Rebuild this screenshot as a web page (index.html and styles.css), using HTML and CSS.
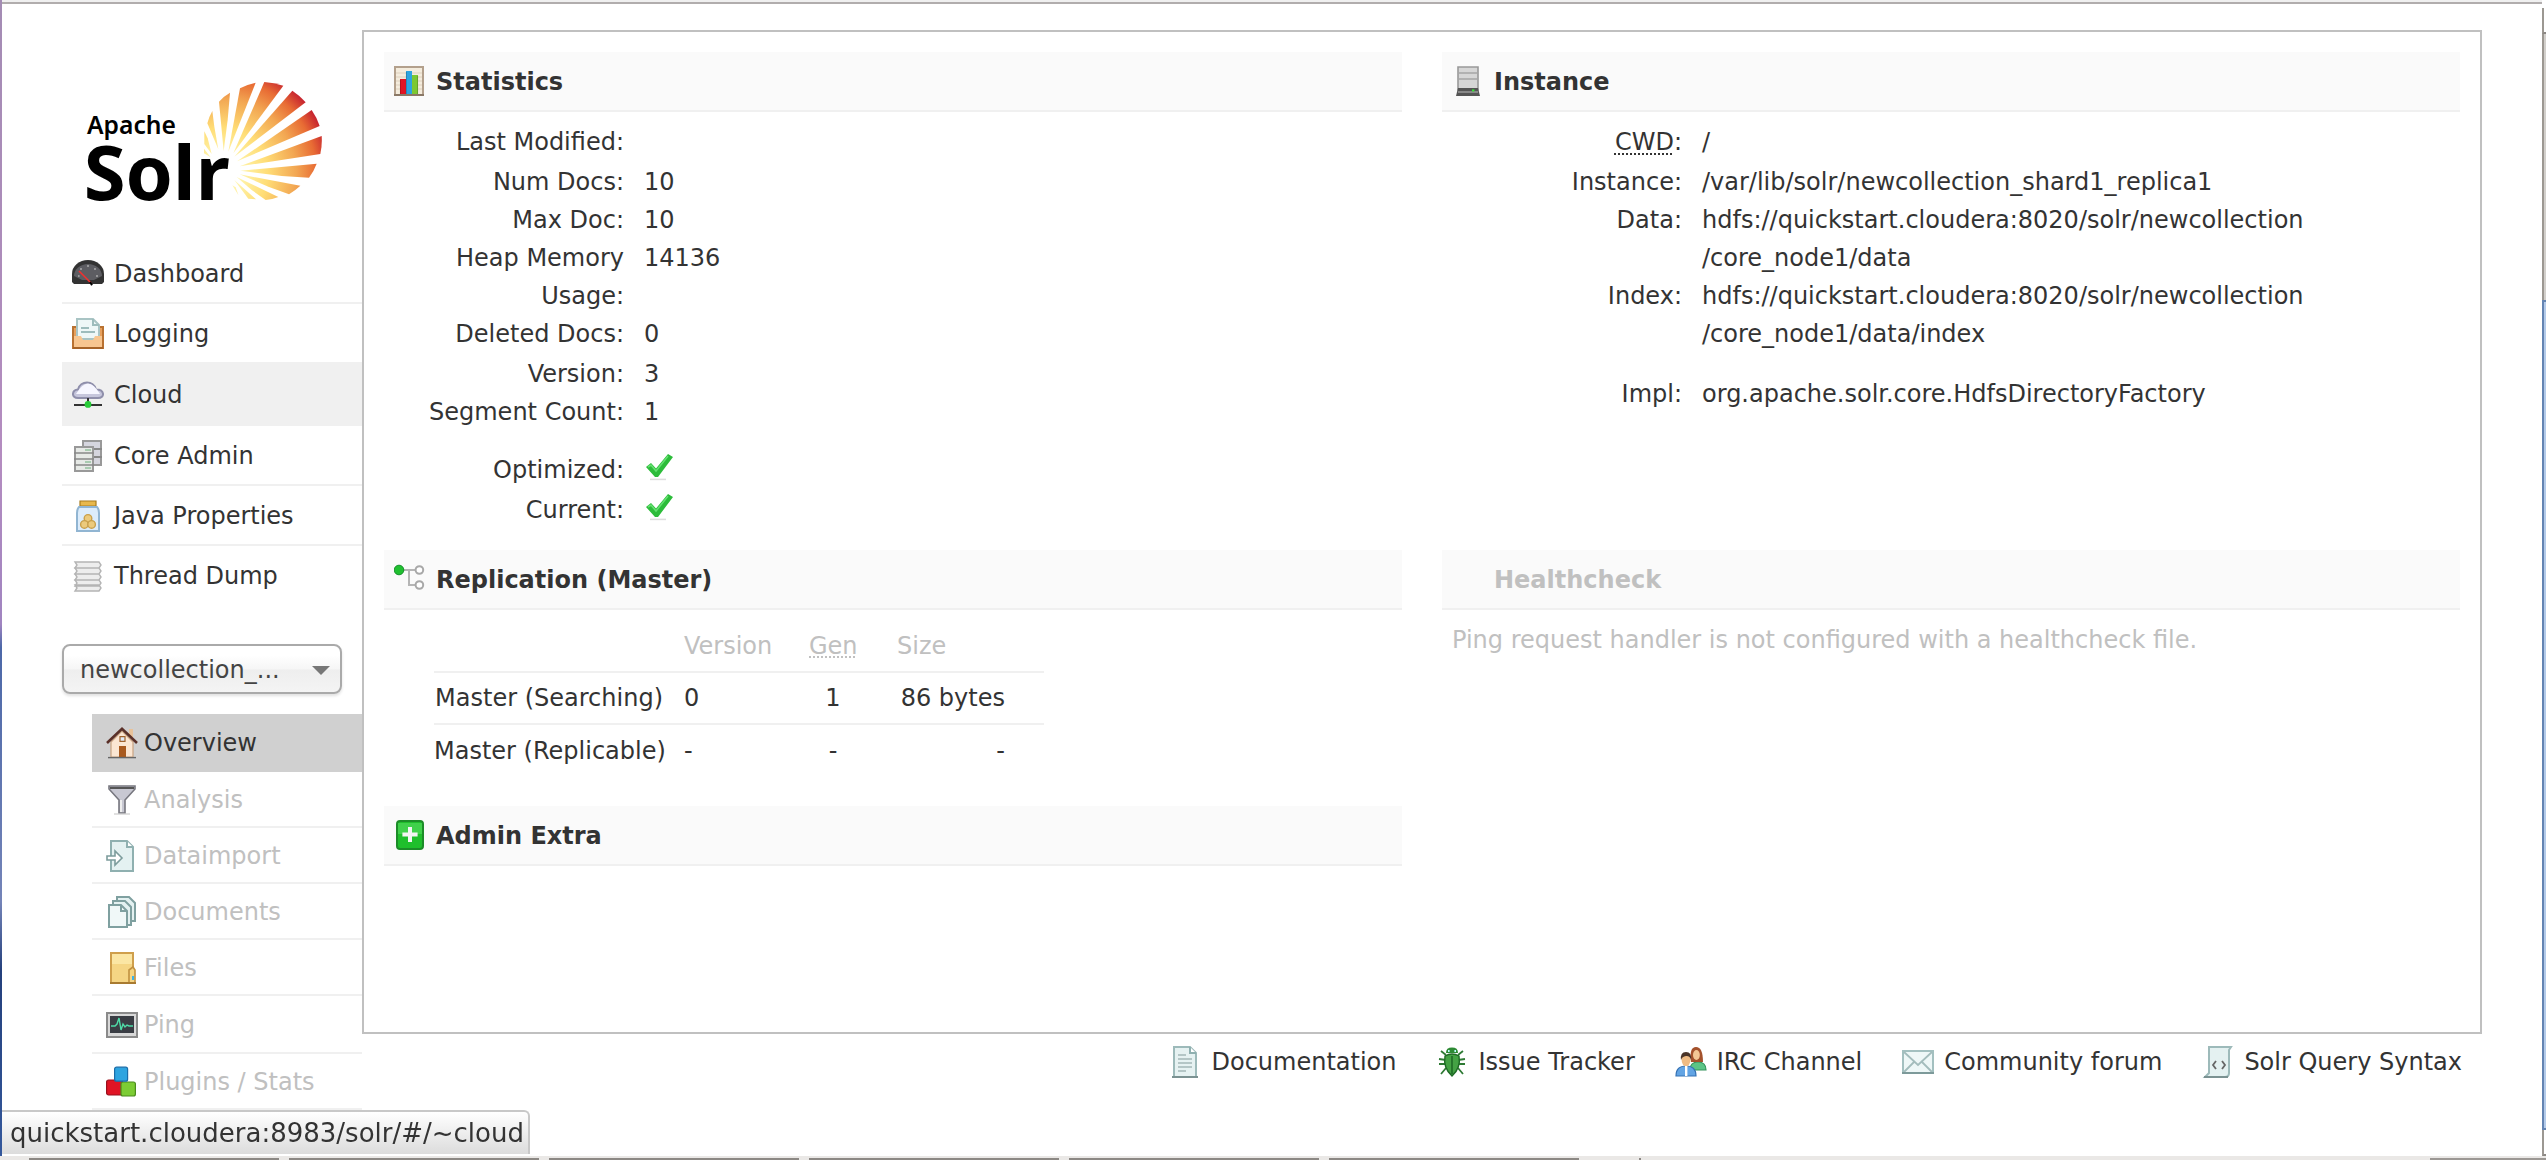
FILE: index.html
```html
<!DOCTYPE html>
<html lang="en">
<head>
<meta charset="utf-8">
<title>Solr Admin</title>
<link rel="stylesheet" href="styles.css">
</head>
<body>
<div class="window">
  <div class="desktop-edge"></div>
  <div class="page">
    <aside class="sidebar">
      <a class="logo" href="#/" aria-label="Apache Solr">
        <svg viewBox="0 0 780 480" width="260" height="160">
          <defs>
            <radialGradient id="sun" gradientUnits="userSpaceOnUse" cx="440" cy="310" r="330">
              <stop offset=".15" stop-color="#fff6b0"/><stop offset=".42" stop-color="#ffdd76"/><stop offset=".68" stop-color="#f2a652"/><stop offset=".86" stop-color="#e86c34"/><stop offset="1" stop-color="#c6222f"/>
            </radialGradient>
          </defs>
          <g fill="url(#sun)">
            <path d="M568 36Q597 38 625 47L475 250Z"/><path d="M495 55Q517 43 542 38L460 245Z"/><path d="M432 95Q447 78 465 68L458 150L446 243Z"/>
            <path d="M397 160Q403 138 412 123L418 170L430 238Z"/><path d="M388 184L398 205L410 252L388 222Z"/><path d="M387 236L407 262L387 250Z"/>
            <path d="M652 62Q674 76 692 97L478 260Z"/><path d="M710 120Q726 143 734 168L486 274Z"/><path d="M740 198Q742 225 736 252L494 289Z"/>
            <path d="M725 281Q717 303 702 323L620 318L496 302Z"/><path d="M676 347Q660 362 642 373L580 350L494 313Z"/><path d="M610 381Q592 388 572 390L530 360L485 321Z"/><path d="M543 388L520 386L478 330Z"/><path d="M490 375L472 346L482 352Z"/>
          </g>
          <text class="logo-small" x="36" y="192">Apache</text>
          <text class="logo-big" x="26" y="390">Solr</text>
        </svg>
      </a>
      <nav class="main-menu">
        <a href="#/"><svg class="icon" viewBox="0 0 16 16"><path d="M0 12V8a8 7 0 0 1 16 0v4l-1 1H1z" fill="#333"/><path d="M1 9a7 6 0 0 1 14 0l-4 2H5z" fill="#5d5d62"/><path d="M3 9h.8M4 5.5h1M7.500 4h1M11 5.500h1M13 9h-1" stroke="#aaa" stroke-width=".7"/><path d="M3.500 6.500l6 6" stroke="#f03030" stroke-width=".8"/><path d="M9 12l1 1.600" stroke="#000"/></svg>Dashboard</a>
        <a class="flush" href="#/~logging"><svg class="icon" viewBox="0 0 16 16"><path d="M.5 4.500h15v10.500h-15z" fill="#e8a05c" stroke="#b97232"/><path d="M2.500.5h8l3 3v7h-11z" fill="#eef7f7" stroke="#a9c4c4"/><path d="M10.500.5v3h3M4.500 5h4M4.500 7h7" fill="none" stroke="#9dbcbc"/><path d="M1 9h3.500l1 2h5l1-2H15v5.500H1z" fill="#f8c690"/><path d="M.5 15h15" stroke="#a86428"/></svg>Logging</a>
        <a class="hover" href="#/~cloud"><svg class="icon" viewBox="0 0 16 16"><path d="M3 9.500C-.5 9.500-.2 5.500 3 5.200 4 .6 11 .6 12 5.200c4.500 0 4.500 4.300 1 4.300z" fill="#c6c6dc" stroke="#8f8fab"/><path d="M2 7.500Q5 2.200 8 2.200T14 7.500z" fill="#f6f6ff"/><path d="M8 9.500v3M1 13h14" stroke="#333"/><circle cx="8" cy="12.700" r="1.700" fill="#28cc38"/></svg>Cloud</a>
        <a href="#/~cores"><svg class="icon" viewBox="0 0 16 16"><path d="M5.500.5h9v12h-9z" fill="#d5d5de" stroke="#999"/><path d="M5 4.500h10M5 8.500h10" stroke="#888"/><path d="M1.500 3.500h9v12h-9z" fill="#e6e9e6" stroke="#999"/><path d="M1 6.500h10M1 9.500h10M1 12.500h10" stroke="#888" stroke-width=".8"/><path d="M6.500 5h3M6.500 11h3M6.500 14h3" stroke="#a8cbb0"/></svg>Core Admin</a>
        <a href="#/~java-properties"><svg class="icon" viewBox="0 0 16 16"><path d="M4 .5h8v2.500H4z" fill="#e8b84c" stroke="#a97c1e" stroke-width=".6"/><path d="M3.500 3.500h9q1 1 1 3v9h-11v-9q0-2 1-3z" fill="#dcecfb" stroke="#91b5d2"/><g fill="#ecca7c" stroke="#c9a04c" stroke-width=".7"><circle cx="8" cy="9.200" r="1.900"/><circle cx="6.200" cy="12.200" r="1.900"/><circle cx="9.800" cy="12.200" r="1.900"/></g></svg>Java Properties</a>
        <a class="flush" href="#/~threads"><svg class="icon" viewBox="0 0 16 16"><path d="M1.500 1h12l1 1.500-1 1.500h-12l1-1.500zM1.500 4h12l1 1.500-1 1.500h-12l1-1.500zM1.500 7h12l1 1.500-1 1.500h-12l1-1.500zM1.500 10h12l1 1.500-1 1.500h-12l1-1.500zM1.500 12.500h12l1 1.500-1 1.500h-12l1-1.500z" fill="#ededed" stroke="#b4b4b4" stroke-width=".7"/></svg>Thread Dump</a>
      </nav>
      <label class="core-picker"><select aria-label="Core Selector"><option>newcollection_...</option></select><svg viewBox="0 0 18 9" width="18" height="9"><path d="M0 0h18l-9 9z" fill="#777"/></svg></label>
      <nav class="core-menu">
        <a class="active" href="#/core"><svg class="icon" viewBox="0 0 16 16"><path d="M11.500 1h2v4h-2z" fill="#e8c29a"/><path d="M2.500 7.500L8 2l5.500 5.500V15h-11z" fill="#fbe6d2" stroke="#c9a382" stroke-width=".6"/><path d="M.5 8L8 .9 15.500 8" fill="none" stroke="#5a3028" stroke-width="1.300"/><path d="M6.500 9.500h3.500V15H6.500z" fill="#a95a1e"/><path d="M7 4.800h2.500v2.400H7z" fill="#dfeaf8" stroke="#a0622c" stroke-width=".6"/><path d="M1 15.300h14" stroke="#666" stroke-width=".7"/></svg>Overview</a>
        <a href="#/core/analysis"><svg class="icon" viewBox="0 0 16 16"><path d="M1.500 1h13v1.500L9.500 8v6.500h-3V8L1.500 2.500z" fill="#c8c8d2" stroke="#77777f" stroke-width=".8"/><path d="M2 2h12" stroke="#555"/><path d="M7.500 8v6" stroke="#eee"/><path d="M4 15h8" stroke="#ccc" stroke-width=".6"/></svg>Analysis</a>
        <a href="#/core/dataimport"><svg class="icon" viewBox="0 0 16 16"><path d="M2.500.5h8l3 3v12h-11z" fill="#e4f1f1" stroke="#8fb0b0"/><path d="M10.500.5v3h3" fill="#fff" stroke="#8fb0b0"/><path d="M.5 8h4V5.500L8 9l-3.500 3.500V10h-4z" fill="#fff" stroke="#7c9c9c" stroke-width=".8"/></svg>Dataimport</a>
        <a href="#/core/documents"><svg class="icon" viewBox="0 0 16 16"><path d="M5.500.5h6l3 3v9h-9z" fill="#e4f1f1" stroke="#7fa0a0"/><path d="M3.500 2.500h6l3 3v9h-9z" fill="#e4f1f1" stroke="#7fa0a0"/><path d="M1.500 4.500h6l3 3v8h-9z" fill="#f0f8f8" stroke="#7fa0a0"/><path d="M7.500 4.500v3h3" fill="none" stroke="#7fa0a0"/></svg>Documents</a>
        <a href="#/core/files"><svg class="icon" viewBox="0 0 16 16"><path d="M2.500.5h11v15h-11z" fill="#f5d584" stroke="#cf9f4c"/><path d="M3 1h10v5H3z" fill="#fbe6a4"/><path d="M11.500 15.500V9l2-1.500 1 1.500v6.500z" fill="#f5d584" stroke="#c19140" stroke-width=".8"/><path d="M13 12h1v2h-1z" fill="#39b3ea"/><path d="M2 15.500h13" stroke="#a87a30"/></svg>Files</a>
        <a class="tall" href="#/core/ping"><svg class="icon" viewBox="0 0 16 16"><path d="M.5 2h15v12H.5z" fill="#d8d8d8" stroke="#8a8a8a"/><path d="M2 3.500h12v8.500H2z" fill="#3a3d44"/><path d="M2.500 8.500h2l1-1 1-3 1 6 1-3 1 1.500 1-1 1 .5h2" fill="none" stroke="#4fdca8" stroke-width=".7"/></svg>Ping</a>
        <a href="#/core/plugins"><svg class="icon" viewBox="0 0 16 16"><rect x=".3" y="7" width="8" height="7.500" rx="1" fill="#e01424" stroke="#98101c" stroke-width=".6"/><rect x="7.500" y="8" width="7.200" height="7" rx="1" fill="#7ccc34" stroke="#4a8c1c" stroke-width=".6"/><rect x="4.300" y=".6" width="6.500" height="7" rx="1" fill="#2ea4e0" stroke="#1a6ca8" stroke-width=".6"/></svg>Plugins / Stats</a>
      </nav>
    </aside>
    <main class="main">
      <div class="content">
        <div class="column">
          <section class="block statistics">
            <h2><svg class="icon" viewBox="0 0 16 16"><path d="M.5.5h14v14H.5z" fill="#f4ecdd" stroke="#b3a08c"/><path d="M1 3.500h13M1 5.500h13M1 7.500h13M1 9.500h13M1 11.500h13" stroke="#ddd0bd" stroke-width=".6"/><path d="M3 6.500h3V14H3z" fill="#e01424"/><path d="M6 2.500h3V14H6z" fill="#2ea4e0"/><path d="M9 4.500h3V14H9z" fill="#7cc832"/><path d="M6.200 3v11M3.200 7v7M11.800 5v9" stroke="#000" stroke-opacity=".25" stroke-width=".4"/><path d="M0 14.500h15" stroke="#8a7866"/></svg>Statistics</h2>
            <dl>
              <dt>Last Modified:</dt><dd class="roomy"></dd>
              <dt>Num Docs:</dt><dd>10</dd>
              <dt>Max Doc:</dt><dd>10</dd>
              <dt>Heap Memory Usage:</dt><dd>14136</dd>
              <dt>Deleted Docs:</dt><dd class="roomy">0</dd>
              <dt>Version:</dt><dd>3</dd>
              <dt>Segment Count:</dt><dd>1</dd>
              <dt class="apart">Optimized:</dt><dd class="apart roomy"><svg class="tick" role="img" aria-label="yes" viewBox="0 0 16 16"><path d="M1 8l2.500-2 2.500 2.700L12 1.500 14.500 3 7 13H5.500z" fill="#2cbc3a"/><path d="M2 8l1.500-1 2.500 3 6-7.500" fill="none" stroke="#63e070" stroke-width=".8"/><path d="M3 14.200h8" stroke="#ddd" stroke-width=".8"/></svg></dd>
              <dt>Current:</dt><dd><svg class="tick" role="img" aria-label="yes" viewBox="0 0 16 16"><path d="M1 8l2.500-2 2.500 2.700L12 1.500 14.500 3 7 13H5.500z" fill="#2cbc3a"/><path d="M2 8l1.500-1 2.500 3 6-7.500" fill="none" stroke="#63e070" stroke-width=".8"/><path d="M3 14.200h8" stroke="#ddd" stroke-width=".8"/></svg></dd>
            </dl>
          </section>
          <section class="block replication">
            <h2><svg class="icon" viewBox="0 0 16 16"><path d="M4 3h8M7.500 3v7.500h4" fill="none" stroke="#b5b5b5"/><circle cx="2.500" cy="3" r="2.400" fill="#20c030" stroke="#14902a" stroke-width=".5"/><circle cx="12.700" cy="3" r="1.900" fill="#fff" stroke="#a8a8a8"/><circle cx="12.700" cy="10.500" r="1.900" fill="#fff" stroke="#a8a8a8"/></svg>Replication (Master)</h2>
            <table>
              <thead><tr><td></td><th scope="col">Version</th><th scope="col"><abbr title="Generation">Gen</abbr></th><th scope="col">Size</th></tr></thead>
              <tbody>
                <tr><th scope="row">Master (Searching)</th><td>0</td><td>1</td><td>86 bytes</td></tr>
                <tr><th scope="row">Master (Replicable)</th><td>-</td><td>-</td><td>-</td></tr>
              </tbody>
            </table>
          </section>
          <section class="block">
            <h2><svg class="icon" viewBox="0 0 16 16"><rect x="1.500" y=".5" width="13" height="14" rx="1.500" fill="#1fbf2c" stroke="#1c8c28"/><path d="M2 1.500h12V7H2z" fill="#4fd858" opacity=".7"/><path d="M8 3.500v7.500M4.200 7.200h7.600" stroke="#f4f4f4" stroke-width="2"/></svg>Admin Extra</h2>
          </section>
        </div>
        <div class="column">
          <section class="block instance">
            <h2><svg class="icon" viewBox="0 0 16 16"><path d="M3 .5h10V12H3z" fill="#d6d6d6" stroke="#999" stroke-width=".8"/><path d="M3 3.500h10M3 6.500h10" stroke="#a5a5a5" stroke-width=".8"/><path d="M3 11h10l1 4H2z" fill="#555"/><path d="M3 13h10" stroke="#888"/><path d="M10 11.700h1.200v1H10z" fill="#35e035"/></svg>Instance</h2>
            <dl>
              <dt><abbr title="Current Working Directory">CWD</abbr>:</dt><dd class="roomy">/</dd>
              <dt>Instance:</dt><dd>/var/lib/solr/newcollection_shard1_replica1</dd>
              <dt>Data:</dt><dd>hdfs://quickstart.cloudera:8020/solr/newcollection<br>/core_node1/data</dd>
              <dt>Index:</dt><dd class="roomy">hdfs://quickstart.cloudera:8020/solr/newcollection<br>/core_node1/data/index</dd>
              <dt class="apart">Impl:</dt><dd class="apart">org.apache.solr.core.HdfsDirectoryFactory</dd>
            </dl>
          </section>
          <section class="block healthcheck">
            <h2><span class="icon"></span>Healthcheck</h2>
            <p>Ping request handler is not configured with a healthcheck file.</p>
          </section>
        </div>
      </div>
      <footer class="links">
        <a href="#docs"><svg class="icon" viewBox="0 0 16 16"><path d="M2.500.5h8l3 3v12h-11z" fill="#e6f2f2" stroke="#9dbaba"/><path d="M10.500.5v3h3" fill="#fff" stroke="#8fb0b0"/><path d="M4.500 4.500h4M4.500 6.500h7M4.500 8.500h7M4.500 10.500h7M4.500 12.500h4" stroke="#a4b8b8" stroke-width=".8"/><path d="M1.500 15.500h13" stroke="#7b9292"/></svg>Documentation</a>
        <a href="#issues"><svg class="icon" viewBox="0 0 16 16"><path d="M5 4.500L2.500 2.500M11 4.500l2.500-2M5 7L1.500 6.500M11 7l3.500-.5M5 9H1.500M11 9h3.500M5 11l-2.500 3M11 11l2.500 3" stroke="#2e7a34" stroke-width=".9"/><path d="M5 3.500Q5 .8 8 .8t3 2.700z" fill="#2e8a34"/><path d="M4.500 5Q8 3 11.500 5q1 6-3.500 10Q3.500 11 4.500 5z" fill="#44a244" stroke="#1f6a26" stroke-width=".7"/><path d="M8 5v9" stroke="#1f6a26" stroke-width=".8"/><path d="M6 2.500h.8M9.200 2.500h.8" stroke="#bff"/></svg>Issue Tracker</a>
        <a href="#irc"><svg class="icon" viewBox="0 0 16 16"><path d="M7.500 12q0-4 4-4t4 4z" fill="#5cc486" stroke="#35935c" stroke-width=".6"/><path d="M8 8Q7 .5 10.500.5T14 8z" fill="#a4522c"/><ellipse cx="10.700" cy="4.500" rx="1.700" ry="2.500" fill="#f3c795"/><path d="M.5 15q0-5 5-5t5 5z" fill="#62a4e4" stroke="#3572b4" stroke-width=".6"/><ellipse cx="5.500" cy="7" rx="2.200" ry="3.200" fill="#f0bc84"/><path d="M3 7Q2.500 3 5.500 3T8 7Q7.500 4.800 5.500 5T3 7z" fill="#4a3428"/><path d="M5 10h1.200v5H5z" fill="#fff"/></svg>IRC Channel</a>
        <a href="#forum"><svg class="icon" viewBox="0 0 16 16"><path d="M.5 2.500h15v11H.5z" fill="#eef7f7" stroke="#a3c0c0"/><path d="M1 3l7 6.500L15 3M1 13l5-5M15 13l-5-5" fill="none" stroke="#a3bcbc" stroke-width=".9"/><path d="M0 13.500h16" stroke="#7d9a9a"/></svg>Community forum</a>
        <a href="#syntax"><svg class="icon" viewBox="0 0 16 16"><path d="M3.500.5h11l-1 1.500v11.500q0 2-2 2H1.500l2-2z" fill="#e4f1f1" stroke="#9dbaba"/><path d="M7 7.500L5.500 9.500 7 11.500M10 7.500l1.500 2-1.500 2" fill="none" stroke="#666" stroke-width=".9"/><path d="M1 15.500h12" stroke="#7b9292"/></svg>Solr Query Syntax</a>
      </footer>
    </main>
  </div>
  <div class="scrollbar"><div class="scroll-button"></div><div class="scroll-trough"></div><div class="scroll-thumb"></div><div class="scroll-button"></div></div>
</div>
<div class="taskbar"><i></i><i></i><i></i><i></i><i></i><i></i><b></b><em></em></div>
<div class="status">quickstart.cloudera:8983/solr/#/~cloud</div>
</body>
</html>
```
FILE: styles.css
```css
* { box-sizing: border-box; }

body {
  margin: 0;
  min-height: 100vh;
  display: flex;
  flex-direction: column;
  background: #fff;
  color: #333;
  font: 24px/38px "DejaVu Sans", Verdana, sans-serif;
}

a { color: inherit; text-decoration: none; }
.icon { width: 32px; height: 32px; flex: none; }

/* window chrome */
.window { flex: 1; display: flex; }
.desktop-edge {
  width: 2px;
  background: linear-gradient(#a48cb4, #b48cc0 40%, #a084c0 54%, #4c68a8 56%, #7484b8 78%, #24407c 84%, #34589c);
}
.page {
  flex: 1;
  display: flex;
  padding: 26px 60px 0;
  border-top: 2px solid #b1adad;
  box-shadow: 0 -2px #f0f0f0;
  margin-top: 2px;
}
.scrollbar { width: 4px; display: flex; flex-direction: column; padding-top: 8px; }
.scrollbar div { border-left: 2px solid #9c9892; }
.scroll-button { height: 26px; border-bottom: 2px solid #8c8884; background: #fff; }
.scroll-trough { flex: 266; background: #d3d0cc; }
.scrollbar .scroll-thumb { flex: 824; background: #b4cbea; border: 2px solid #6484b2; border-right: 0; }

.taskbar { height: 4px; display: flex; gap: 10px; padding: 2px 0 0 29px; background: #eae8e6; }
.taskbar i { width: 250px; background: #8c8884; }
.taskbar b { width: 2px; margin-left: 50px; background: #8c8884; }
.taskbar em { width: 116px; margin-left: auto; background: #9c9894; }

.status {
  position: fixed;
  left: 2px;
  bottom: 6px;
  height: 44px;
  padding: 0 4px 0 8px;
  border: solid #c8c8c8;
  border-width: 2px 2px 0 0;
  border-radius: 0 6px 0 0;
  background: linear-gradient(#fff, #dcdcdc);
  font-size: 26px;
  line-height: 42px;
}

/* sidebar */
.sidebar { width: 300px; }
.logo { display: block; height: 184px; padding: 40px 0 0 13px; margin-bottom: 30px; }
.logo svg { display: block; }
.logo-small { font: 600 74px "Noto Sans", sans-serif; }
.logo-big { font: bold 228px "Noto Sans", sans-serif; }

.main-menu { margin-bottom: 40px; }
.main-menu a {
  display: flex;
  align-items: center;
  gap: 10px;
  height: 60px;
  padding: 2px 0 0 10px;
  border-bottom: 2px solid #f0f0f0;
}
.main-menu .flush { height: 58px; border-bottom: 0; }
.main-menu .hover { height: 64px; padding-top: 4px; background: #f0f0f0; }

.core-picker { position: relative; display: block; width: 280px; margin-bottom: 20px; }
.core-picker select {
  appearance: none;
  display: block;
  width: 100%;
  height: 50px;
  padding: 2px 16px 0;
  border: 2px solid #aaa;
  border-radius: 8px;
  background: linear-gradient(#fff 20%, #f6f6f6 50%, #eee 52%, #f4f4f4);
  box-shadow: 0 2px 3px rgba(0, 0, 0, .12);
  color: #444;
  font: inherit;
}
.core-picker svg { position: absolute; right: 12px; top: 22px; pointer-events: none; }

.core-menu { margin-left: 30px; color: #c0c0c0; }
.core-menu a {
  display: flex;
  align-items: center;
  gap: 6px;
  height: 56px;
  padding: 2px 0 0 14px;
  border-bottom: 2px solid #f0f0f0;
}
.core-menu .active { height: 58px; background: #d0d0d0; border-color: #d0d0d0; color: #333; }
.core-menu .tall { height: 58px; }

/* content */
.main { flex: 1; }
.content {
  display: grid;
  grid-template-columns: 1fr 1fr;
  gap: 40px;
  min-height: 1004px;
  padding: 20px;
  border: 2px solid #c0c0c0;
}
.block h2 {
  display: flex;
  align-items: center;
  gap: 10px;
  height: 60px;
  margin: 0;
  padding: 2px 0 0 10px;
  background: #fafafa;
  border-bottom: 2px solid #f0f0f0;
  font-size: 24px;
}
.statistics, .instance { min-height: 498px; }

dl { display: grid; grid-template-columns: 240px 1fr; column-gap: 20px; margin: 11px 0 0; }
dt { padding-left: 20px; text-align: right; }
dd { margin: 0; }
.roomy { min-height: 40px; padding-bottom: 2px; }
.apart { margin-top: 20px; }
.tick { display: block; width: 32px; height: 32px; }
abbr { text-decoration: underline dotted 2px; text-underline-offset: 3px; }

table { width: 610px; margin: 10px 0 0 50px; border-collapse: collapse; table-layout: fixed; }
.replication { min-height: 256px; }
th, td { height: 52px; padding: 0 20px; font-weight: normal; text-align: left; white-space: nowrap; }
thead { color: #c0c0c0; }
tbody tr { border-top: 2px solid #f0f0f0; }
tr > :nth-child(1) { width: 240px; padding: 0 11px 0 0; text-align: right; }
tr > :nth-child(2) { width: 115px; padding: 0 10px; }
tr > :nth-child(3) { width: 88px; text-align: center; }
tbody td:nth-child(4) { padding-right: 39px; text-align: right; }

.healthcheck { color: #c0c0c0; }
.healthcheck p { margin: 11px 10px 0; }

.links { display: flex; justify-content: flex-end; gap: 40px; padding: 9px 20px 0 0; }
.links a { display: flex; align-items: center; gap: 10px; }
```
